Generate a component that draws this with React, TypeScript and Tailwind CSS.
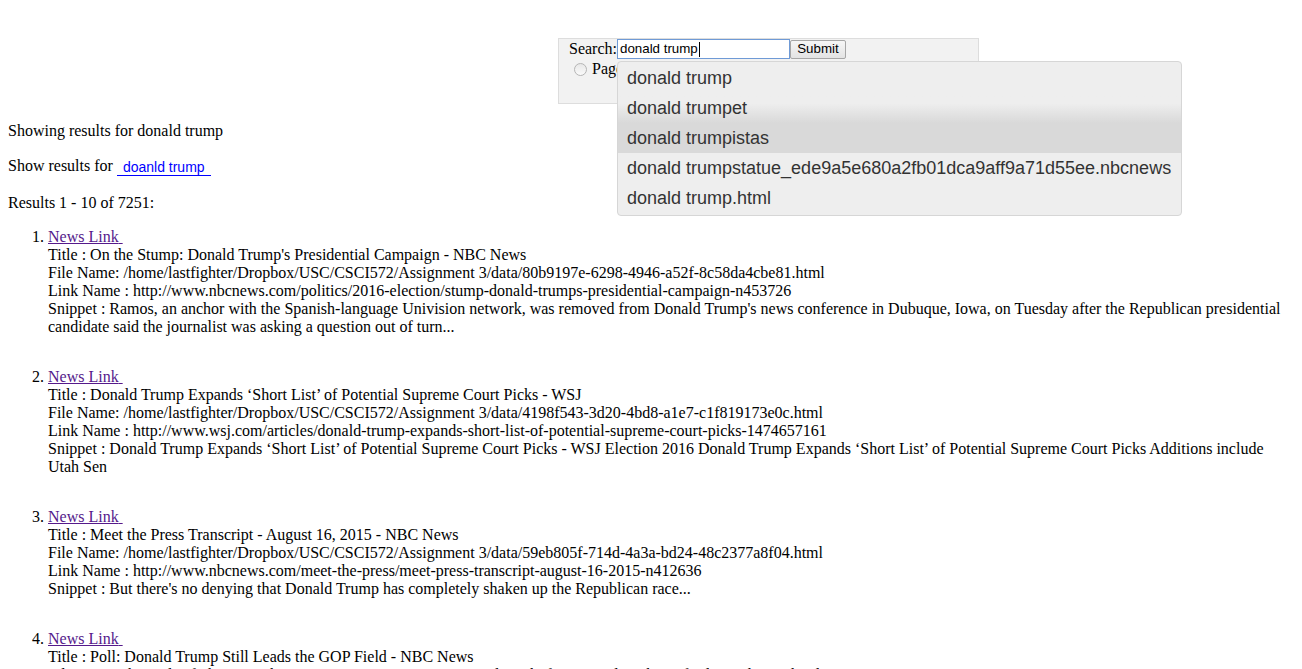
import React from "react";

const results = [
  {
    title: "On the Stump: Donald Trump's Presidential Campaign - NBC News",
    file: "/home/lastfighter/Dropbox/USC/CSCI572/Assignment 3/data/80b9197e-6298-4946-a52f-8c58da4cbe81.html",
    link: "http://www.nbcnews.com/politics/2016-election/stump-donald-trumps-presidential-campaign-n453726",
    snippet:
      "Ramos, an anchor with the Spanish-language Univision network, was removed from Donald Trump's news conference in Dubuque, Iowa, on Tuesday after the Republican presidential candidate said the journalist was asking a question out of turn...",
  },
  {
    title: "Donald Trump Expands \u2018Short List\u2019 of Potential Supreme Court Picks - WSJ",
    file: "/home/lastfighter/Dropbox/USC/CSCI572/Assignment 3/data/4198f543-3d20-4bd8-a1e7-c1f819173e0c.html",
    link: "http://www.wsj.com/articles/donald-trump-expands-short-list-of-potential-supreme-court-picks-1474657161",
    snippet:
      "Donald Trump Expands \u2018Short List\u2019 of Potential Supreme Court Picks - WSJ Election 2016 Donald Trump Expands \u2018Short List\u2019 of Potential Supreme Court Picks Additions include Utah Sen",
  },
  {
    title: "Meet the Press Transcript - August 16, 2015 - NBC News",
    file: "/home/lastfighter/Dropbox/USC/CSCI572/Assignment 3/data/59eb805f-714d-4a3a-bd24-48c2377a8f04.html",
    link: "http://www.nbcnews.com/meet-the-press/meet-press-transcript-august-16-2015-n412636",
    snippet: "But there's no denying that Donald Trump has completely shaken up the Republican race...",
  },
  {
    title: "Poll: Donald Trump Still Leads the GOP Field - NBC News",
    file: "/home/lastfighter/Dropbox/USC/CSCI572/Assignment 3/data/2b3f1a7c-5e4d-4c2b-9a8f-7d6e5c4b3a21.html",
    link: "http://www.nbcnews.com/politics/2016-election/poll-donald-trump-still-leads-gop-field-n426856",
    snippet: "Donald Trump still leads the Republican presidential field...",
  },
];

const suggestions = [
  "donald trump",
  "donald trumpet",
  "donald trumpistas",
  "donald trumpstatue_ede9a5e680a2fb01dca9aff9a71d55ee.nbcnews",
  "donald trump.html",
];

export default function App() {
  return (
    <div className="p-[8px] font-['Liberation_Serif',serif] text-[16px] leading-[18px] text-black bg-white min-h-[669px]">
      <div className="relative ml-[550px] mt-[30px] w-[421px] h-[66px] border border-[#dddddd] bg-[#f2f2f2] pl-[10px]">
        <div className="flex items-center h-[20px]">
          <span className="leading-[18px]">Search:</span>
          <div className="relative w-[173px] h-[20px] border border-[#6f9ad6] bg-white flex items-center pl-[2px] font-['Liberation_Sans',Arial,sans-serif] text-[13.33px] text-black">
            <span>donald trump</span>
            <span className="inline-block w-[1px] h-[15px] bg-black ml-[1px]"></span>
          </div>
          <div className="w-[56px] h-[19px] border border-[#a6a6a6] rounded-[2px] bg-linear-to-b from-[#f6f6f6] to-[#e3e3e3] flex items-center justify-center font-['Liberation_Sans',Arial,sans-serif] text-[13.33px] text-black">
            Submit
          </div>
        </div>
        <div className="flex items-center h-[18px] mt-[1px]">
          <span className="inline-block w-[13px] h-[13px] rounded-full border border-[#b5b5b5] bg-linear-to-b from-[#e8e8e8] to-[#fafafa] ml-[5px] mr-[5px]"></span>
          <span>PageRank</span>
        </div>

        <div className="absolute left-[58px] top-[22px] w-[565px] border border-[#d6d6d6] rounded-[4px] bg-[#eeeeee] pt-[1px] pb-[2px] font-['Liberation_Sans',Arial,sans-serif] text-[18px] text-[#333333] z-10">
          {suggestions.map((s, i) => (
            <div
              key={s}
              className={
                "h-[30px] leading-[30px] pl-[9px] whitespace-nowrap " +
                (i === 1
                  ? "bg-linear-to-b from-[#eeeeee] from-35% to-[#d9d9d9]"
                  : i === 2
                  ? "bg-[#d9d9d9]"
                  : "")
              }
            >
              {s}
            </div>
          ))}
        </div>
      </div>

      <p className="mt-[18px]">Showing results for donald trump</p>
      <p className="mt-[17px]">
        Show results for{" "}
        <span className="inline-block align-middle px-[6px] pt-[1px] pb-0 border-b border-[#0000ff] font-['Liberation_Sans',Arial,sans-serif] text-[14px] leading-[16px] text-[#0000ff]">
          doanld trump
        </span>
      </p>
      <p className="mt-[18px]">Results 1 - 10 of 7251:</p>

      <ol className="list-decimal pl-[40px] mt-[16px]">
        {results.map((r) => (
          <li key={r.file} className="mb-[32px]">
            <a className="text-[#551a8b] underline" href="#">
              News Link{"\u00a0"}
            </a>
            <br />
            Title : {r.title}
            <br />
            File Name: {r.file}
            <br />
            Link Name : {r.link}
            <br />
            Snippet : {r.snippet}
          </li>
        ))}
      </ol>
    </div>
  );
}
